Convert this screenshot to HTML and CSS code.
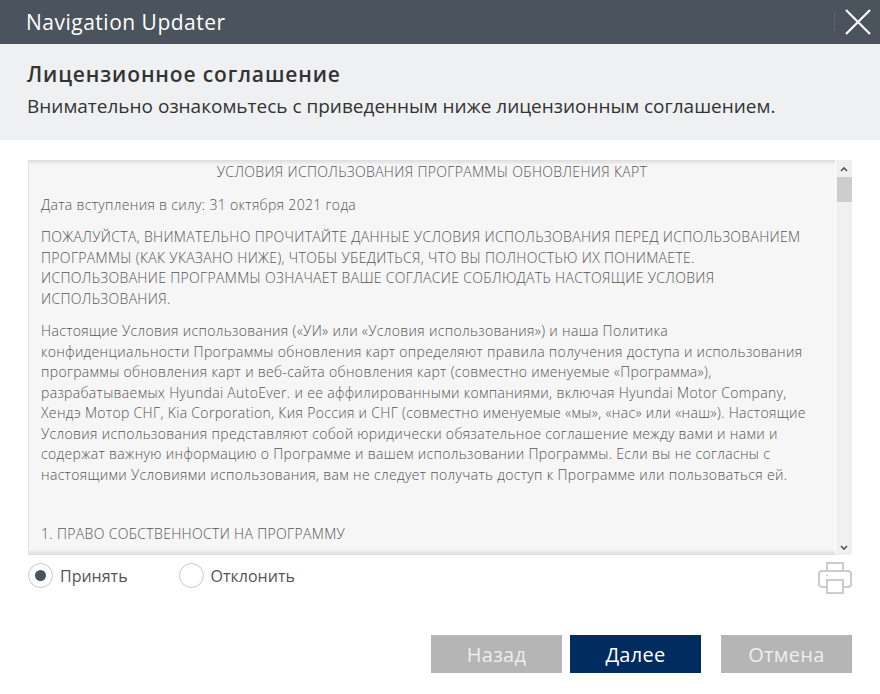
FILE: index.html
```html
<!DOCTYPE html>
<html lang="ru">
<head>
<meta charset="utf-8">
<title>Navigation Updater</title>
<link rel="stylesheet" href="styles.css">
</head>
<body>
<div class="app">
  <header class="titlebar">
    <span class="app-name">Navigation Updater</span>
    <span class="sep"></span>
    <svg class="close" width="26" height="26" viewBox="0 0 26 26"><path d="M1 1L25 25M25 1L1 25" stroke="#fff" stroke-width="2.2" fill="none"/></svg>
  </header>
  <section class="intro">
    <h1 class="intro-title">Лицензионное соглашение</h1>
    <p class="intro-text">Внимательно ознакомьтесь с приведенным ниже лицензионным соглашением.</p>
  </section>
  <main class="content">
    <div class="license">
      <div class="license-view">
        <div class="license-text">
          <p class="center">УСЛОВИЯ ИСПОЛЬЗОВАНИЯ ПРОГРАММЫ ОБНОВЛЕНИЯ КАРТ</p>
          <p>Дата вступления в силу: 31 октября 2021 года</p>
          <p>ПОЖАЛУЙСТА, ВНИМАТЕЛЬНО ПРОЧИТАЙТЕ ДАННЫЕ УСЛОВИЯ ИСПОЛЬЗОВАНИЯ ПЕРЕД ИСПОЛЬЗОВАНИЕМ<br>ПРОГРАММЫ (КАК УКАЗАНО НИЖЕ), ЧТОБЫ УБЕДИТЬСЯ, ЧТО ВЫ ПОЛНОСТЬЮ ИХ ПОНИМАЕТЕ.<br>ИСПОЛЬЗОВАНИЕ ПРОГРАММЫ ОЗНАЧАЕТ ВАШЕ СОГЛАСИЕ СОБЛЮДАТЬ НАСТОЯЩИЕ УСЛОВИЯ<br>ИСПОЛЬЗОВАНИЯ.</p>
          <p>Настоящие Условия использования («УИ» или «Условия использования») и наша Политика<br>конфиденциальности Программы обновления карт определяют правила получения доступа и использования<br>программы обновления карт и веб-сайта обновления карт (совместно именуемые «Программа»),<br>разрабатываемых Hyundai AutoEver. и ее аффилированными компаниями, включая Hyundai Motor Company,<br>Хендэ Мотор СНГ, Kia Corporation, Кия Россия и СНГ (совместно именуемые «мы», «нас» или «наш»). Настоящие<br>Условия использования представляют собой юридически обязательное соглашение между вами и нами и<br>содержат важную информацию о Программе и вашем использовании Программы. Если вы не согласны с<br>настоящими Условиями использования, вам не следует получать доступ к Программе или пользоваться ей.</p>
          <p class="section-head">1. ПРАВО СОБСТВЕННОСТИ НА ПРОГРАММУ</p>
        </div>
      </div>
      <div class="scrollbar">
        <svg class="arrow" width="8" height="6" viewBox="0 0 8 6"><path d="M1 5L4 2L7 5" stroke="#555" stroke-width="1.6" fill="none"/></svg>
        <div class="thumb"></div>
        <div class="track"></div>
        <svg class="arrow" width="8" height="6" viewBox="0 0 8 6"><path d="M1 1L4 4L7 1" stroke="#555" stroke-width="1.6" fill="none"/></svg>
      </div>
    </div>
    <div class="choice-row">
      <label class="choice"><span class="radio checked"></span><span>Принять</span></label>
      <label class="choice"><span class="radio"></span><span>Отклонить</span></label>
      <svg class="printer" width="34" height="33" viewBox="0 0 34 33" fill="none" stroke="#cccccc" stroke-width="2"><path d="M9 10V2H25V10"/><path d="M9 26H4Q1 26 1 23V13Q1 10 4 10H30Q33 10 33 13V23Q33 26 30 26H25"/><rect x="9" y="19" width="16" height="13"/><circle cx="9" cy="14.500" r="1" fill="#cccccc" stroke="none"/></svg>
    </div>
  </main>
  <footer class="actions">
    <button class="btn">Назад</button>
    <button class="btn primary">Далее</button>
    <button class="btn cancel">Отмена</button>
  </footer>
</div>
</body>
</html>
```
FILE: styles.css
```css
* { box-sizing: border-box; }
html, body { margin: 0; padding: 0; background: #fff; }
body { font-family: "Open Sans", "Noto Sans", sans-serif; width: 880px; height: 694px; overflow: hidden; }
.titlebar { height: 44px; background: #4b535c; display: flex; align-items: center; padding: 0 9px 0 26px; color: #fff; }
.app-name { font-size: 21px; letter-spacing: 0.5px; flex: 1; margin-bottom: 1px; }
.sep { width: 1px; height: 18px; background: #5d646c; margin-right: 10px; }
.close { display: block; }
.intro { height: 96px; background: #eef0f2; padding: 18px 27px 0; color: #333; }
.intro-title { margin: 0; font-size: 21px; line-height: 24px; font-weight: 600; letter-spacing: 0.87px; }
.intro-text { margin: 8px 0 0; font-size: 19px; line-height: 24px; }
.content { padding: 20px 28px 0; }
.license { display: flex; height: 395px; }
.license-view { width: 807px; background: linear-gradient(#dcdcdc, #f6f6f6 5px, #f6f6f6 calc(100% - 6px), #dcdcdc); border-left: 1px solid #e4e4e4; overflow: hidden; }
.license-text { margin-top: 2px; padding: 0 12px; font-size: 14px; font-weight: 300; line-height: 20.500px; letter-spacing: 0.33px; color: #555; white-space: nowrap; }
.license-text p { margin: 0 0 12px; }
.center { text-align: center; }
.section-head { margin-top: 39px !important; }
.scrollbar { width: 16px; margin-left: 1px; background: #f0f0f0; display: flex; flex-direction: column; align-items: center; padding: 6px 0 4px; }
.arrow { display: block; flex: none; }
.thumb { width: 15px; height: 25px; background: #cdcdcd; margin-top: 5px; flex: none; }
.track { flex: 1; }
.choice-row { display: flex; align-items: center; height: 43px; }
.choice { display: flex; align-items: center; gap: 7px; font-size: 16px; color: #555; margin: 0 51px 2px 0; }
.radio { width: 25px; height: 25px; border: 1px solid #c8c8c8; border-radius: 50%; display: flex; align-items: center; justify-content: center; background: #fff; }
.radio.checked::after { content: ""; width: 11px; height: 11px; border-radius: 50%; background: #4b535c; }
.printer { margin: 2px 0 0 auto; display: block; }
.actions { display: flex; justify-content: flex-end; gap: 8px; padding: 37px 28px 0 0; }
.btn { width: 131px; height: 38px; border: 0; padding: 0; background: #b5b5b5; color: #eee; font-family: inherit; font-size: 20px; letter-spacing: 0.3px; }
.btn.primary { background: #002c5f; color: #fff; }
.btn.cancel { margin-left: 12px; }
```
